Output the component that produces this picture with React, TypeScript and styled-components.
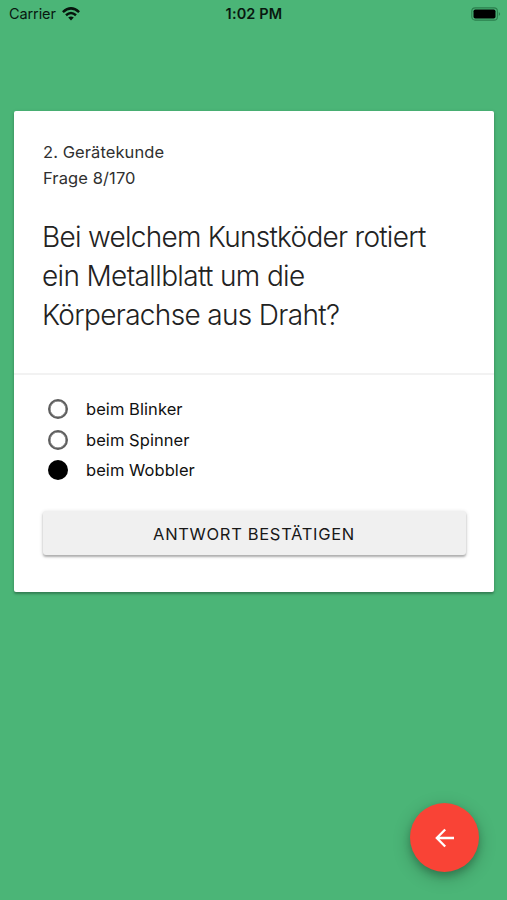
import React, { useState } from "react";
import styled, { createGlobalStyle } from "styled-components";

const GlobalStyle = createGlobalStyle`
  *, *::before, *::after { box-sizing: border-box; }
  body {
    margin: 0;
    background: #4bb577;
    font-family: Inter, "Liberation Sans", sans-serif;
    color: #111;
  }
`;

const Screen = styled.div`
  width: 507px;
  height: 900px;
  display: flex;
  flex-direction: column;
  overflow: hidden;
  background: #4bb577;
`;

const StatusBar = styled.header`
  height: 27px;
  flex: none;
  display: grid;
  grid-template-columns: 1fr auto 1fr;
  align-items: center;
  padding: 0 6px 0 9px;
  color: #08180f;
`;

const Carrier = styled.div`
  display: flex;
  align-items: center;
  gap: 6px;
  font-size: 14.5px;
  letter-spacing: -0.1px;
`;

const Clock = styled.time`
  margin-right: 2px;
  font-size: 14.5px;
  font-weight: 600;
  letter-spacing: 0.15px;
`;

const BatterySlot = styled.div`
  display: flex;
  justify-content: flex-end;
`;

const Card = styled.main`
  width: 480px;
  height: 481px;
  flex: none;
  margin: 84px 0 0 14px;
  background: #fff;
  border-radius: 2px;
  box-shadow: 0 2px 2px rgba(0, 0, 0, 0.22), 0 1px 4px rgba(0, 0, 0, 0.14);
`;

const QuestionSection = styled.section`
  height: 264px;
  padding: 28px 29px 0;
  border-bottom: 2px solid #f2f2f2;
`;

const Meta = styled.p<{ $spacing: number }>`
  margin: 0;
  font-size: 16.5px;
  line-height: 26px;
  letter-spacing: ${(p) => p.$spacing}px;
  color: #303030;
`;

const Question = styled.h1`
  margin: 27px 0 0 -1px;
  font-size: 28px;
  font-weight: 300;
  line-height: 39px;
  color: #222;
`;

const QuestionLine = styled.span<{ $spacing: number }>`
  display: block;
  white-space: nowrap;
  letter-spacing: ${(p) => p.$spacing}px;
`;

const AnswerSection = styled.section`
  padding: 19px 29px 0;
`;

const Answer = styled.label`
  display: flex;
  align-items: center;
  height: 30.5px;
  padding-left: 5px;
  gap: 18px;
  font-size: 16.5px;
  letter-spacing: 0.06px;
`;

const Radio = styled.input`
  appearance: none;
  width: 20px;
  height: 20px;
  margin: 0;
  border: 2px solid #5e5e5e;
  border-radius: 50%;
  box-shadow: inset 0 0 0 0.5px #5e5e5e;

  &:checked {
    border: 0;
    box-shadow: none;
    background: #000;
  }
`;

const ConfirmButton = styled.button`
  display: block;
  width: 423px;
  height: 44px;
  margin-top: 25px;
  padding: 2px 1px 0 0;
  border: 0;
  border-radius: 3px;
  background: #f0f0f0;
  box-shadow: 0 2px 2px rgba(0, 0, 0, 0.24), 0 1px 4px rgba(0, 0, 0, 0.16);
  font-family: inherit;
  font-size: 16.5px;
  letter-spacing: 0.68px;
  color: #181818;
`;

const BackButton = styled.button`
  display: flex;
  align-items: center;
  justify-content: center;
  width: 69px;
  height: 69px;
  flex: none;
  align-self: flex-end;
  margin: auto 28px 28px 0;
  padding: 0;
  border: 0;
  border-radius: 50%;
  background: #f94336;
  box-shadow: 0 4px 7px rgba(0, 0, 0, 0.18), 0 5px 18px rgba(0, 0, 0, 0.24);
`;

const WifiIcon = () => (
  <svg width="18" height="14" viewBox="0 0 18 14" aria-hidden="true">
    <g fill="none" stroke="#06140c" strokeWidth="2.5">
      <path d="M0.9 5.1 Q9 -2.4 17.1 5.1" />
      <path d="M4 8.3 Q9 3.8 14 8.3" />
    </g>
    <path d="M6.2 10.6 Q9 8.2 11.8 10.6 L9 13.6 Z" fill="#06140c" />
  </svg>
);

const BatteryIcon = () => (
  <svg width="30" height="14" viewBox="0 0 30 14" aria-hidden="true">
    <rect x="0.8" y="0.9" width="25.6" height="12.2" rx="3.4" fill="none" stroke="#2b7f4d" strokeWidth="1.1" />
    <rect x="2.5" y="2.5" width="22" height="9" rx="1.8" fill="#000" />
    <path d="M27.8 4.9 Q30.4 7 27.8 9.1 Z" fill="#2b7f4d" />
  </svg>
);

const BackIcon = () => (
  <svg width="20" height="20" viewBox="0 0 20 20" fill="none" stroke="#fff" strokeWidth="2.3" aria-hidden="true">
    <path d="M10.2 1.5 L1.8 10 L10.2 18.5 M2.2 10 H19" />
  </svg>
);

const questionLines = [
  { text: "Bei welchem Kunstköder rotiert", spacing: -0.73 },
  { text: "ein Metallblatt um die", spacing: -0.64 },
  { text: "Körperachse aus Draht?", spacing: -0.66 },
];

const answers = ["beim Blinker", "beim Spinner", "beim Wobbler"];

export default function App() {
  const [selected, setSelected] = useState(2);
  return (
    <>
      <GlobalStyle />
      <Screen>
        <StatusBar>
          <Carrier>
            Carrier
            <WifiIcon />
          </Carrier>
          <Clock>1:02 PM</Clock>
          <BatterySlot>
            <BatteryIcon />
          </BatterySlot>
        </StatusBar>
        <Card>
          <QuestionSection>
            <Meta $spacing={0.08}>2. Gerätekunde</Meta>
            <Meta $spacing={0.1}>Frage 8/170</Meta>
            <Question>
              {questionLines.map((line) => (
                <QuestionLine key={line.text} $spacing={line.spacing}>
                  {line.text}
                </QuestionLine>
              ))}
            </Question>
          </QuestionSection>
          <AnswerSection>
            {answers.map((answer, index) => (
              <Answer key={answer}>
                <Radio
                  type="radio"
                  name="answer"
                  checked={selected === index}
                  onChange={() => setSelected(index)}
                />
                {answer}
              </Answer>
            ))}
            <ConfirmButton>ANTWORT BESTÄTIGEN</ConfirmButton>
          </AnswerSection>
        </Card>
        <BackButton aria-label="Zurück">
          <BackIcon />
        </BackButton>
      </Screen>
    </>
  );
}
